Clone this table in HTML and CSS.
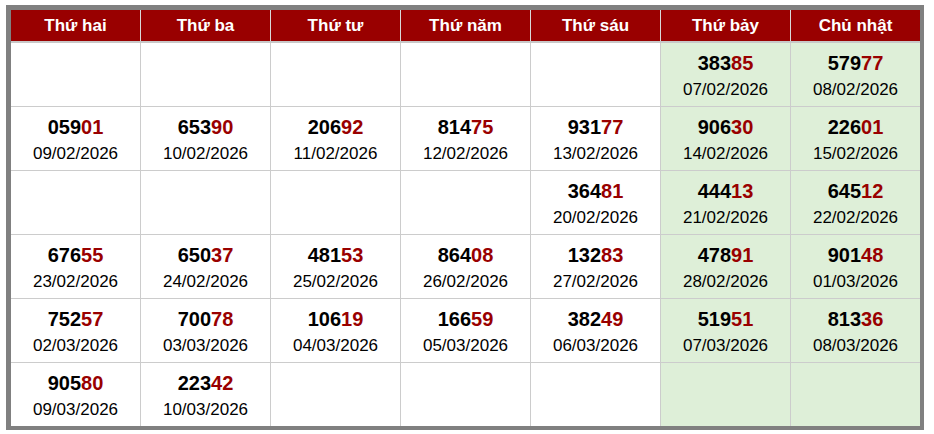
FILE: index.html
```html
<!DOCTYPE html>
<html lang="vi">
<head>
<meta charset="utf-8">
<link rel="stylesheet" href="styles.css">
</head>
<body>
<table class="cal">
<thead>
<tr><th>Thứ hai</th><th>Thứ ba</th><th>Thứ tư</th><th>Thứ năm</th><th>Thứ sáu</th><th>Thứ bảy</th><th>Chủ nhật</th></tr>
</thead>
<tbody>
<tr>
<td></td><td></td><td></td><td></td><td></td>
<td class="we"><span class="num">383<b>85</b></span><span class="date">07/02/2026</span></td>
<td class="we"><span class="num">579<b>77</b></span><span class="date">08/02/2026</span></td>
</tr>
<tr>
<td><span class="num">059<b>01</b></span><span class="date">09/02/2026</span></td>
<td><span class="num">653<b>90</b></span><span class="date">10/02/2026</span></td>
<td><span class="num">206<b>92</b></span><span class="date">11/02/2026</span></td>
<td><span class="num">814<b>75</b></span><span class="date">12/02/2026</span></td>
<td><span class="num">931<b>77</b></span><span class="date">13/02/2026</span></td>
<td class="we"><span class="num">906<b>30</b></span><span class="date">14/02/2026</span></td>
<td class="we"><span class="num">226<b>01</b></span><span class="date">15/02/2026</span></td>
</tr>
<tr>
<td></td><td></td><td></td><td></td>
<td><span class="num">364<b>81</b></span><span class="date">20/02/2026</span></td>
<td class="we"><span class="num">444<b>13</b></span><span class="date">21/02/2026</span></td>
<td class="we"><span class="num">645<b>12</b></span><span class="date">22/02/2026</span></td>
</tr>
<tr>
<td><span class="num">676<b>55</b></span><span class="date">23/02/2026</span></td>
<td><span class="num">650<b>37</b></span><span class="date">24/02/2026</span></td>
<td><span class="num">481<b>53</b></span><span class="date">25/02/2026</span></td>
<td><span class="num">864<b>08</b></span><span class="date">26/02/2026</span></td>
<td><span class="num">132<b>83</b></span><span class="date">27/02/2026</span></td>
<td class="we"><span class="num">478<b>91</b></span><span class="date">28/02/2026</span></td>
<td class="we"><span class="num">901<b>48</b></span><span class="date">01/03/2026</span></td>
</tr>
<tr>
<td><span class="num">752<b>57</b></span><span class="date">02/03/2026</span></td>
<td><span class="num">700<b>78</b></span><span class="date">03/03/2026</span></td>
<td><span class="num">106<b>19</b></span><span class="date">04/03/2026</span></td>
<td><span class="num">166<b>59</b></span><span class="date">05/03/2026</span></td>
<td><span class="num">382<b>49</b></span><span class="date">06/03/2026</span></td>
<td class="we"><span class="num">519<b>51</b></span><span class="date">07/03/2026</span></td>
<td class="we"><span class="num">813<b>36</b></span><span class="date">08/03/2026</span></td>
</tr>
<tr>
<td><span class="num">905<b>80</b></span><span class="date">09/03/2026</span></td>
<td><span class="num">223<b>42</b></span><span class="date">10/03/2026</span></td>
<td></td><td></td><td></td>
<td class="we"></td><td class="we"></td>
</tr>
</tbody>
</table>
</body>
</html>
```

FILE: styles.css
```css
html, body {
  margin: 0;
  padding: 0;
  background: #fff;
}
body {
  padding: 5px 0 0 6px;
  font-family: "Liberation Sans", Arial, sans-serif;
}
.cal {
  border-collapse: collapse;
  table-layout: fixed;
  border-style: solid;
  border-color: #808080;
  border-width: 5px 4px 4px 5px;
}
.cal th {
  width: 129px;
  background: #990000;
  color: #fff;
  font-size: 17px;
  font-weight: bold;
  height: 31px;
  padding: 0;
  border-left: 1px solid #d8d8d8;
  border-right: 1px solid #d8d8d8;
  border-bottom: 2px solid #c8c8c8;
  text-align: center;
  vertical-align: middle;
}
.cal td {
  height: 55px;
  padding: 8px 0 0;
  border: 1px solid #cccccc;
  text-align: center;
  vertical-align: top;
  background: #fff;
}
.cal td.we {
  background: #deefd8;
}
.num {
  display: block;
  font-size: 20px;
  font-weight: bold;
  line-height: 24px;
  color: #000;
}
.num b {
  color: #990000;
}
.date {
  display: block;
  font-size: 17px;
  line-height: 30px;
  color: #000;
}
```
